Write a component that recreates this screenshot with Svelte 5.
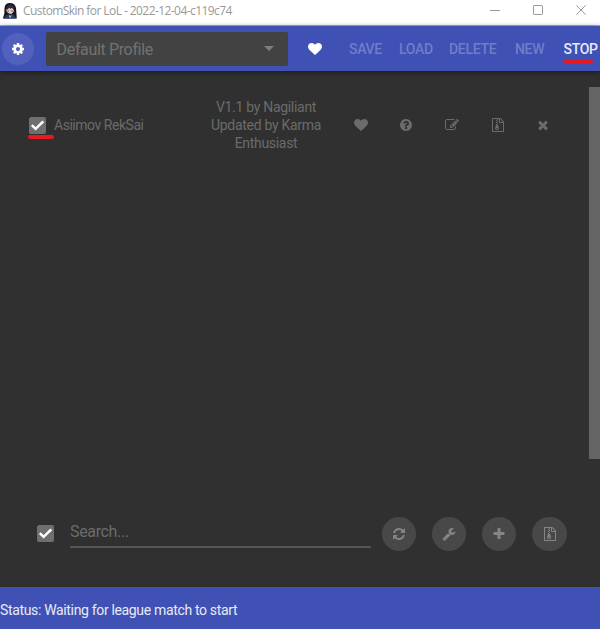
<script>
  const paths = {
    gear: 'M1152 896q0-106-75-181t-181-75-181 75-75 181 75 181 181 75 181-75 75-181zm512-109v222q0 12-8 23t-20 13l-185 28q-19 54-39 91 35 50 107 138 10 12 10 25t-9 23q-27 37-99 108t-94 71q-12 0-26-9l-138-108q-44 23-91 38-16 136-29 186-7 28-36 28h-222q-14 0-24.5-8.5t-11.5-21.5l-28-184q-49-16-90-37l-141 107q-10 9-25 9-14 0-25-11-126-114-165-168-7-10-7-23 0-12 8-23 15-21 51-66.5t54-70.5q-27-50-41-99l-183-27q-13-2-21-12.5t-8-23.5v-222q0-12 8-23t19-13l186-28q14-46 39-92-40-57-107-138-10-12-10-24 0-10 9-23 26-36 98.5-107.5t94.5-71.5q13 0 26 10l138 107q44-23 91-38 16-136 29-186 7-28 36-28h222q14 0 24.5 8.5t11.5 21.5l28 184q49 16 90 37l142-107q9-9 24-9 13 0 25 10 129 119 165 170 7 8 7 22 0 12-8 23-15 21-51 66.5t-54 70.5q26 50 41 98l183 28q13 2 21 12.5t8 23.5z',
    heart: 'M896 1664q-26 0-44-18l-624-602q-10-8-27.5-26t-55.5-65.5-68-97.5-53.5-121-23.5-138q0-220 127-344t351-124q62 0 126.5 21.5t120 58 95.5 68.5 76 68q36-36 76-68t95.5-68.5 120-58 126.5-21.5q224 0 351 124t127 344q0 221-229 450l-623 600q-18 18-44 18z',
    help: 'M1024 1376v-192q0-14-9-23t-23-9h-192q-14 0-23 9t-9 23v192q0 14 9 23t23 9h192q14 0 23-9t9-23zm256-672q0-88-55.5-163t-138.5-116-170-41q-243 0-371 213-15 24 8 42l132 100q7 6 19 6 16 0 25-12 53-68 86-92 34-24 86-24 48 0 85.5 26t37.5 59q0 38-20 61t-68 45q-63 28-115.5 86.5t-52.5 125.5v36q0 14 9 23t23 9h192q14 0 23-9t9-23q0-19 21.5-49.5t54.5-49.5q32-18 49-28.5t46-35 44.5-48 28-60.5 12.5-81zm384 192q0 209-103 385.5t-279.5 279.5-385.5 103-385.5-103-279.5-279.5-103-385.5 103-385.5 279.5-279.5 385.5-103 385.5 103 279.5 279.5 103 385.5z',
    edit: 'M888 1184l116-116-152-152-116 116v56h96v96h56zm440-720q-16-16-33 1l-350 350q-17 17-1 33t33-1l350-350q17-17 1-33zm80 594v190q0 119-84.5 203.5t-203.5 84.5h-832q-119 0-203.5-84.5t-84.5-203.5v-832q0-119 84.5-203.5t203.5-84.5h832q63 0 117 25 15 7 18 23 3 17-9 29l-49 49q-14 14-32 8-23-6-45-6h-832q-66 0-113 47t-47 113v832q0 66 47 113t113 47h832q66 0 113-47t47-113v-126q0-13 9-22l64-64q15-15 35-7t20 29zm-96-738l288 288-672 672h-288v-288zm444 132l-92 92-288-288 92-92q28-28 68-28t68 28l152 152q28 28 28 68t-28 68z',
    zip: 'M768 384v-128h-128v128h128zm128 128v-128h-128v128h128zm-128 128v-128h-128v128h128zm128 128v-128h-128v128h128zm700-388q28 28 48 76t20 88v1152q0 40-28 68t-68 28h-1344q-40 0-68-28t-28-68v-1600q0-40 28-68t68-28h896q40 0 88 20t76 48zm-444-244v376h376q-10-29-22-41l-313-313q-12-12-41-22zm384 1528v-1024h-416q-40 0-68-28t-28-68v-416h-128v128h-128v-128h-512v1536h1280zm-627-721l107 349q8 27 8 52 0 83-72.5 137.5t-183.5 54.5-183.5-54.5-72.5-137.5q0-25 8-52 21-63 120-396v-128h128v128h79q22 0 39 13t23 34zm-141 465q53 0 90.5-19t37.5-45-37.5-45-90.5-19-90.5 19-37.5 45 37.5 45 90.5 19z',
    times: 'M1490 1322q0 40-28 68l-136 136q-28 28-68 28t-68-28l-294-294-294 294q-28 28-68 28t-68-28l-136-136q-28-28-28-68t28-68l294-294-294-294q-28-28-28-68t28-68l136-136q28-28 68-28t68 28l294 294 294-294q28-28 68-28t68 28l136 136q28 28 28 68t-28 68l-294 294 294 294q28 28 28 68z',
    plus: 'M1600 736v192q0 40-28 68t-68 28h-416v416q0 40-28 68t-68 28h-192q-40 0-68-28t-28-68v-416h-416q-40 0-68-28t-28-68v-192q0-40 28-68t68-28h416v-416q0-40 28-68t68-28h192q40 0 68 28t28 68v416h416q40 0 68 28t28 68z',
    refresh: 'M1639 1056q0 5-1 7-64 268-268 434.5t-478 166.5q-146 0-282.5-55t-243.5-157l-129 129q-19 19-45 19t-45-19-19-45v-448q0-26 19-45t45-19h448q26 0 45 19t19 45-19 45l-137 137q71 66 161 102t187 36q134 0 250-65t186-179q11-17 53-117 8-23 30-23h192q13 0 22.5 9.5t9.5 22.5zm25-800v448q0 26-19 45t-45 19h-448q-26 0-45-19t-19-45 19-45l138-138q-148-137-349-137-134 0-250 65t-186 179q-11 17-53 117-8 23-30 23h-199q-13 0-22.5-9.5t-9.5-22.5v-7q65-268 270-434.5t480-166.5q146 0 284 55.5t245 156.5l130-129q19-19 45-19t45 19 19 45z',
    wrench: 'M448 1472q0-26-19-45t-45-19-45 19-19 45 19 45 45 19 45-19 19-45zm644-420l-682 682q-37 37-90 37-52 0-91-37l-106-108q-38-36-38-90 0-53 38-91l681-681q39 98 114.5 173.5t173.5 114.5zm634-435q0 39-23 106-47 134-164.5 217.5t-258.5 83.5q-185 0-316.5-131.5t-131.5-316.5 131.5-316.5 316.5-131.5q58 0 121.5 16.5t107.5 46.5q16 11 16 28t-16 28l-293 169v224l193 107q5-3 79-48.5t135.5-81 70.5-35.5q15 0 23.5 10t8.5 25z'
  };
  const rowIcons = ['heart', 'help', 'edit', 'zip', 'times'];
  const tools = ['refresh', 'wrench', 'plus', 'zip'];
</script>

{#snippet icon(name)}
  <svg class="icon" viewBox="0 0 1792 1792" aria-hidden="true"><path d={paths[name]} /></svg>
{/snippet}

{#snippet checkbox()}
  <span class="check" role="checkbox" aria-checked="true" tabindex="0">
    <svg viewBox="0 0 17 17"><path d="M2.800 8.200 6.600 11.800 14.300 4.300" /></svg>
  </span>
{/snippet}

<div class="window">
  <header class="title">
    <svg class="avatar" viewBox="0 0 16 16">
      <path fill="#17151e" d="M2.500 5Q3 0 8 0T14 5L14.800 15.500H.8Q3 11 2.500 5Z" />
      <path fill="#e7c8c3" d="M4.600 6Q6.500 3.800 8 4.500 10.500 4 12 7 11.800 10 8.500 11 5 10 4.300 8Z" />
      <path fill="#30283c" d="M4.500 4 5.500 7 7.200 4.500 8.300 6.300 9.500 4 12 7 12 3 8 1ZM5.400 7.500h1.400v.9H5.400zM9.400 7.500h1.400v.9H9.400z" />
      <path fill="#263d68" d="M3.500 12.500 7 11 8 12.500 10 11 13 13 13.500 15.500H2Z" />
      <path fill="#d7d5e2" d="m6.900 11 1.200 2.500 1.400-2.500-.6 3.500H7.400Z" />
    </svg>
    <h1>CustomSkin for LoL - 2022-12-04-c119c74</h1>
    <div class="controls">
      <svg viewBox="0 0 10 10"><path d="M0 5.500H10" /></svg>
      <svg viewBox="0 0 10 10"><rect x=".5" y=".5" width="9" height="9" rx=".6" /></svg>
      <svg viewBox="0 0 10 10"><path d="M.3.300 9.700 9.700M9.700.300.3 9.700" /></svg>
    </div>
  </header>

  <nav>
    <button class="gear">{@render icon('gear')}</button>
    <div class="select"><span>Default Profile</span><i></i></div>
    <button class="fav">{@render icon('heart')}</button>
    <button class="text save">SAVE</button>
    <button class="text load">LOAD</button>
    <button class="text delete">DELETE</button>
    <button class="text new">NEW</button>
    <button class="text stop">STOP<b class="mark"></b></button>
  </nav>

  <main>
    <div class="row">
      <div class="box">{@render checkbox()}<b class="mark"></b></div>
      <span class="name">Asiimov RekSai</span>
      <p>V1.1 by Nagiliant<br />Updated by Karma<br />Enthusiast</p>
      <div class="actions">
        {#each rowIcons as name}<button>{@render icon(name)}</button>{/each}
      </div>
    </div>
    <div class="scroll"></div>
  </main>

  <section class="bottom">
    {@render checkbox()}
    <div class="search"><span>Search...</span></div>
    <div class="tools">
      {#each tools as name}<button>{@render icon(name)}</button>{/each}
    </div>
  </section>

  <footer><span>Status: Waiting for league match to start</span></footer>
</div>

<style>
  :global(body) { margin: 0; }
  * { box-sizing: border-box; }
  .window {
    width: 600px; height: 629px; overflow: hidden;
    display: flex; flex-direction: column;
    background: #303030; color: #6b6b6b;
    font: 14px/18px Roboto, sans-serif;
  }
  button { border: 0; padding: 0; margin: 0; background: none; color: inherit; font: inherit; display: flex; align-items: center; justify-content: center; flex: none; }
  .icon { width: 14px; height: 14px; fill: currentColor; display: block; }

  .title { height: 26px; flex: none; display: flex; align-items: flex-start; background: #fff; border-bottom: 1px solid #a9b0dc; padding: 3px 14px 0 2px; }
  .avatar { width: 16px; height: 16px; flex: none; }
  h1 { margin: 0 0 0 5px; font: 12px/16px "Open Sans", sans-serif; color: #999; white-space: nowrap; letter-spacing: -.57px; }
  .controls { margin-left: auto; display: flex; gap: 33px; padding-top: 2px; }
  .controls svg { width: 10px; height: 10px; fill: none; stroke: #999; stroke-width: 1; }

  nav { height: 45px; flex: none; display: flex; align-items: center; background: #3f51b5; padding: 0 0 0 2px; box-shadow: 0 1px 5px #0008; position: relative; }
  .gear { width: 32px; height: 32px; border-radius: 50%; background: #5262bc; color: #fff; }
  .select { width: 242px; height: 34px; margin-left: 11.600px; flex: none; border-radius: 2px; background: #424242; display: flex; align-items: center; justify-content: space-between; padding: 2px 14px 0 11px; font-size: 16px; letter-spacing: -.35px; color: #727272; }
  .select i { border: 5px solid transparent; border-top-color: #7d7d7d; border-bottom: 0; margin-top: -2px; }
  .fav { color: #fff; margin-left: 20.400px; }
  .text { position: relative; font-weight: 500; font-size: 14px; letter-spacing: -.3px; color: #717dc8; justify-content: flex-start; white-space: nowrap; }
  .save { width: 50px; margin-left: 27px; }
  .load { width: 50px; }
  .delete { width: 66px; }
  .new { width: 48px; }
  .stop { width: 36px; margin-left: .5px; color: #e8eaf6; }
  .mark { position: absolute; height: 4px; border-radius: 2px; background: #e5191f; }
  .stop .mark { left: 0; width: 30px; top: 20px; }

  main { height: 417px; flex: none; display: flex; align-items: flex-start; justify-content: space-between; padding-top: 16px; }
  .row { width: 566px; height: 76px; display: flex; align-items: center; padding-left: 29px; }
  .box { position: relative; flex: none; }
  .box .mark { left: -1px; top: 18px; width: 26px; }
  .check { width: 17px; height: 17px; display: block; border-radius: 2px; background: #6f6f6f; flex: none; }
  .check svg { display: block; width: 17px; height: 17px; fill: none; stroke: #fff; stroke-width: 2.500; }
  .name { width: 145px; margin-left: 8px; white-space: nowrap; letter-spacing: -.47px; }
  p { margin: 0; width: 134px; text-align: center; letter-spacing: -.3px; }
  .actions { display: flex; margin-left: 5px; }
  .actions button { width: 45.600px; height: 30px; }
  .scroll { width: 11px; height: 372px; background: #646464; }

  .bottom { height: 99px; flex: none; display: flex; align-items: flex-start; padding: 29px 33px 0 37px; }
  .bottom .check { margin-top: 8px; }
  .search { width: 301px; height: 31px; margin-left: 16px; flex: none; border-bottom: 2px solid #555; font-size: 16px; letter-spacing: -.35px; padding-top: 6px; }
  .tools { display: flex; gap: 16px; margin-left: 10.600px; }
  .tools button { width: 34.300px; height: 34px; border-radius: 50%; background: #484848; color: #858585; }

  footer { height: 42px; flex: none; display: flex; align-items: center; background: #3f51b5; color: #e8eaf6; padding-top: 4px; white-space: nowrap; letter-spacing: -.34px; }
</style>
